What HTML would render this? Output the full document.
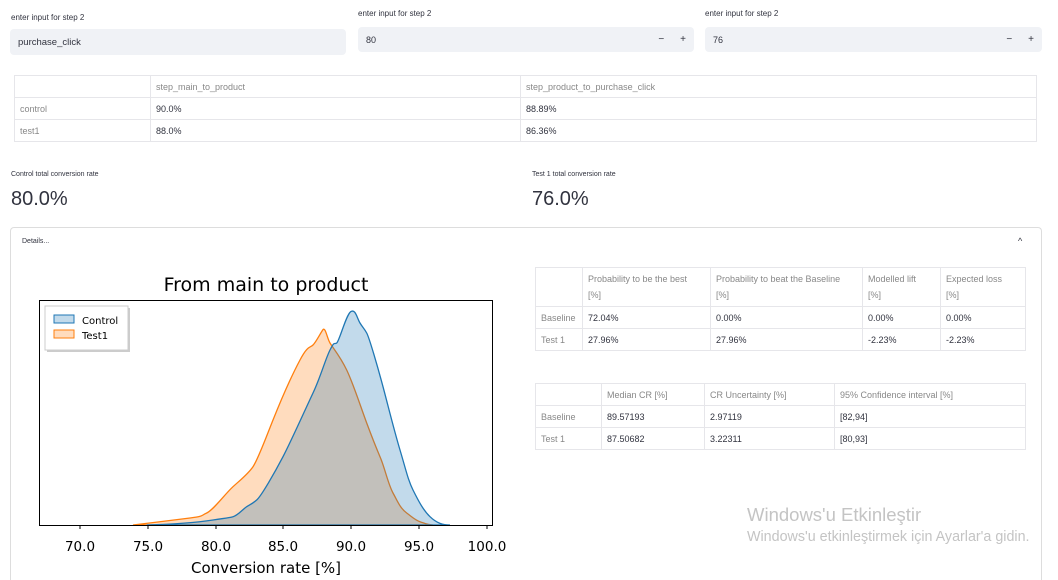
<!DOCTYPE html>
<html><head><meta charset="utf-8"><style>
*{box-sizing:border-box;margin:0;padding:0}
html,body{width:1058px;height:580px;overflow:hidden}
body{background:#fff;font-family:"Liberation Sans",sans-serif;color:#31333f;position:relative}
.a{position:absolute}
.lbl{font-size:8px;color:#31333f}
.inp{background:#f0f2f6;border-radius:4px;font-size:9.5px;display:flex;align-items:center;padding-left:8px}
.pm{position:absolute;right:8px;font-size:10px;letter-spacing:16px;margin-right:-16px}
table{border-collapse:collapse;font-size:9px;position:absolute}
td{border:1px solid #e6e6ea;padding:0 5px;height:22px;color:#31333f;vertical-align:middle}
td.h,tr.h td{color:#888}
.big{font-size:20px;color:#31333f}
</style></head><body>
<div class="a lbl" style="left:11px;top:13px">enter input for step 2</div>
<div class="a inp" style="left:10px;top:29px;width:336px;height:26px">purchase_click</div>
<div class="a lbl" style="left:358px;top:9px">enter input for step 2</div>
<div class="a inp" style="left:358px;top:27px;width:336px;height:25px;font-size:9px">80<span class="pm">−+</span></div>
<div class="a lbl" style="left:705px;top:9px">enter input for step 2</div>
<div class="a inp" style="left:705px;top:27px;width:337px;height:25px;font-size:9px">76<span class="pm">−+</span></div>

<table style="left:14px;top:75px;width:1023px">
<tr class="h"><td style="width:136px"></td><td style="width:370px">step_main_to_product</td><td>step_product_to_purchase_click</td></tr>
<tr><td class="h">control</td><td>90.0%</td><td>88.89%</td></tr>
<tr><td class="h">test1</td><td>88.0%</td><td>86.36%</td></tr>
</table>

<div class="a" style="left:11px;top:171px;font-size:7px">Control total conversion rate</div>
<div class="a big" style="left:11px;top:188px">80.0%</div>
<div class="a" style="left:532px;top:171px;font-size:7px">Test 1 total conversion rate</div>
<div class="a big" style="left:532px;top:188px">76.0%</div>

<div class="a" style="left:10px;top:227px;width:1032px;height:353px;border:1px solid #ddd;border-bottom:none;border-radius:4px 4px 0 0"></div>
<div class="a" style="left:22px;top:238px;font-size:7px">Details...</div>
<div class="a" style="left:1018px;top:236px;font-size:9px">^</div>

<svg class="a" style="left:0;top:260px" width="520" height="320" viewBox="0 260 520 320">
<text x="266" y="291" font-size="19" text-anchor="middle" font-family="DejaVu Sans" fill="#000">From main to product</text>
<path d="M133,525 C150,523 175,520 190,518 S200,516 206.7,513 S225,494 233,486.7 S248,474 253,466.7 S265,440 273,420 S292,375 300,360 S310,348 313,345 S320,334 322.7,330 S327,338 330,343 S340,356 346.7,370 S360,405 366.7,423 S375,445 380,456.7 S388,484 393,493 S400,508 406.7,513 S415,520 420,521.7 S428,525 433,525 Z" fill="#ff7f0e" fill-opacity="0.27" stroke="#ff7f0e" stroke-width="1.3"/>
<path d="M146.7,525 C180,524 200,522 213,520 S228,518 233,516.7 S243,509 246.7,506.7 S252,504 256.7,500 S275,472 283,456.7 S305,410 313,393 S325,360 330,350 S334,345 336.7,343 S346,315 350.7,311.7 S357,318 360,323 S364,328 366.7,333 S378,368 383,386.7 S394,430 400,450 S408,480 413,490 S423,510 430,516.7 S443,525 450,525 Z" fill="#1f77b4" fill-opacity="0.27" stroke="#1f77b4" stroke-width="1.3"/>
<rect x="39.5" y="300.5" width="453" height="225" fill="none" stroke="#000" stroke-width="1"/>
<rect x="47" y="308" width="83" height="44" fill="#999" opacity="0.5"/>
<rect x="45" y="306" width="83" height="44" fill="#fff" stroke="#ccc"/>
<rect x="54" y="315" width="20" height="8" fill="#1f77b4" fill-opacity="0.27" stroke="#1f77b4"/>
<rect x="54" y="330" width="20" height="8" fill="#ff7f0e" fill-opacity="0.27" stroke="#ff7f0e"/>
<text x="82" y="324" font-size="10" font-family="DejaVu Sans">Control</text>
<text x="82" y="339" font-size="10" font-family="DejaVu Sans">Test1</text>
<g font-size="13.5" font-family="DejaVu Sans" text-anchor="middle" fill="#000">
<text x="80" y="551">70.0</text><text x="148" y="551">75.0</text><text x="216" y="551">80.0</text><text x="283" y="551">85.0</text><text x="351" y="551">90.0</text><text x="419" y="551">95.0</text><text x="487" y="551">100.0</text>
</g>
<g stroke="#000"><path d="M80,525v4M148,525v4M216,525v4M283,525v4M351,525v4M419,525v4M487,525v4"/></g>
<text x="266" y="573" font-size="15" font-family="DejaVu Sans" text-anchor="middle" fill="#000">Conversion rate [%]</text>
</svg>

<table style="left:535px;top:267px;width:491px">
<tr class="h"><td style="width:47px;height:39px"></td><td style="width:128px;line-height:16px">Probability to be the best<br>[%]</td><td style="width:152px;line-height:16px">Probability to beat the Baseline<br>[%]</td><td style="width:78px;line-height:16px">Modelled lift<br>[%]</td><td style="line-height:16px">Expected loss<br>[%]</td></tr>
<tr><td class="h">Baseline</td><td>72.04%</td><td>0.00%</td><td>0.00%</td><td>0.00%</td></tr>
<tr><td class="h">Test 1</td><td>27.96%</td><td>27.96%</td><td>-2.23%</td><td>-2.23%</td></tr>
</table>

<table style="left:535px;top:383px;width:491px">
<tr class="h"><td style="width:66px"></td><td style="width:103px">Median CR [%]</td><td style="width:130px">CR Uncertainty [%]</td><td>95% Confidence interval [%]</td></tr>
<tr><td class="h">Baseline</td><td>89.57193</td><td>2.97119</td><td>[82,94]</td></tr>
<tr><td class="h">Test 1</td><td>87.50682</td><td>3.22311</td><td>[80,93]</td></tr>
</table>

<div class="a" style="left:747px;top:504px;font-size:18.5px;color:#c4c4c4;white-space:nowrap">Windows'u Etkinleştir</div>
<div class="a" style="left:747px;top:529px;font-size:14.3px;color:#c4c4c4;white-space:nowrap">Windows'u etkinleştirmek için Ayarlar'a gidin.</div>
</body></html>
